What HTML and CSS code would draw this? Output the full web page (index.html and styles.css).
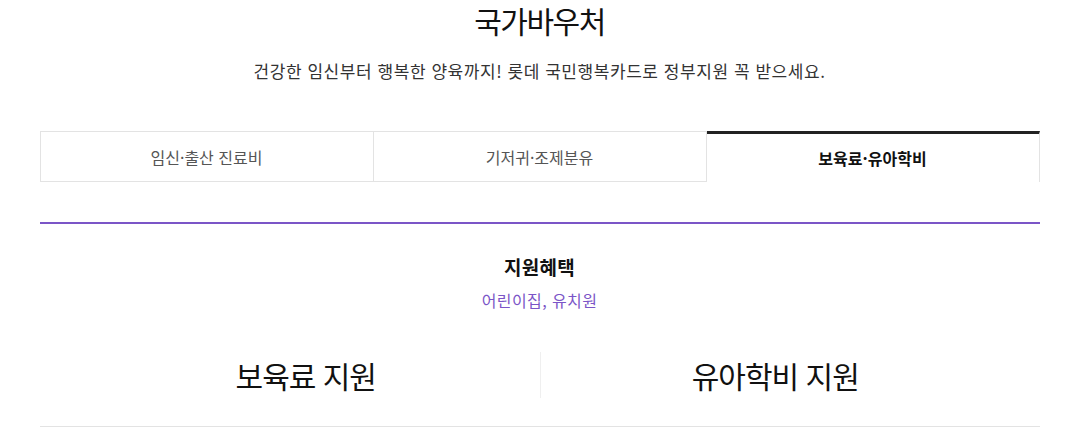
FILE: index.html
```html
<!DOCTYPE html>
<html lang="ko">
<head>
<meta charset="utf-8">
<title>국가바우처</title>
<link rel="stylesheet" href="styles.css">
</head>
<body>
<div class="wrap">
  <h2 class="title">국가바우처</h2>
  <p class="desc">건강한 임신부터 행복한 양육까지! 롯데 국민행복카드로 정부지원 꼭 받으세요.</p>
  <ul class="tabs">
    <li class="tab">임신·출산 진료비</li>
    <li class="tab">기저귀·조제분유</li>
    <li class="tab active">보육료·유아학비</li>
  </ul>
  <div class="panel">
    <h3 class="benefit-title">지원혜택</h3>
    <p class="benefit-sub">어린이집, 유치원</p>
    <div class="cols">
      <div class="col col-left">보육료 지원</div>
      <div class="col col-right">유아학비 지원</div>
    </div>
  </div>
</div>
</body>
</html>
```
FILE: styles.css
```css
* { box-sizing: border-box; }
body {
  margin: 0;
  background: #fff;
  font-family: "Noto Sans CJK KR", "Noto Sans", sans-serif;
  color: #111;
}
.wrap {
  width: 1000px;
  margin: 0 auto;
}
.title {
  margin: 0;
  text-align: center;
  font-size: 30px;
  font-weight: 400;
  line-height: 40px;
  letter-spacing: -1.5px;
  color: #111;
}
.desc {
  margin: 19px 0 0;
  text-align: center;
  font-size: 17px;
  line-height: 24px;
  letter-spacing: 0.55px;
  color: #333;
}
.tabs {
  list-style: none;
  margin: 48px 0 0;
  padding: 0;
  display: flex;
}
.tab {
  flex: 1;
  height: 51px;
  display: flex;
  align-items: center;
  justify-content: center;
  font-size: 16px;
  color: #555;
  border: 1px solid #e3e3e3;
  border-left: none;
}
.tab:first-child { border-left: 1px solid #e3e3e3; }
.tab.active {
  border-top: 3px solid #222;
  border-bottom: none;
  font-weight: 700;
  color: #111;
}
.panel {
  margin-top: 40px;
  border-top: 2px solid #7b55c7;
  border-bottom: 1px solid #e3e3e3;
}
.benefit-title {
  margin: 30px 0 0;
  text-align: center;
  font-size: 19px;
  font-weight: 700;
  line-height: 26px;
  letter-spacing: 0.3px;
  color: #111;
}
.benefit-sub {
  margin: 9px 0 0;
  text-align: center;
  font-size: 16px;
  line-height: 22px;
  letter-spacing: 0.4px;
  color: #7b55c7;
}
.cols {
  display: flex;
  margin-top: 41px;
  padding-bottom: 28px;
}
.col {
  flex: 1;
  height: 46px;
  display: flex;
  align-items: center;
  justify-content: center;
  font-size: 30px;
  letter-spacing: -1px;
  color: #111;
}
.col-left {
  border-right: 1px solid #efefef;
  padding-left: 32px;
}
.col-right {
  padding-right: 30px;
}
```
